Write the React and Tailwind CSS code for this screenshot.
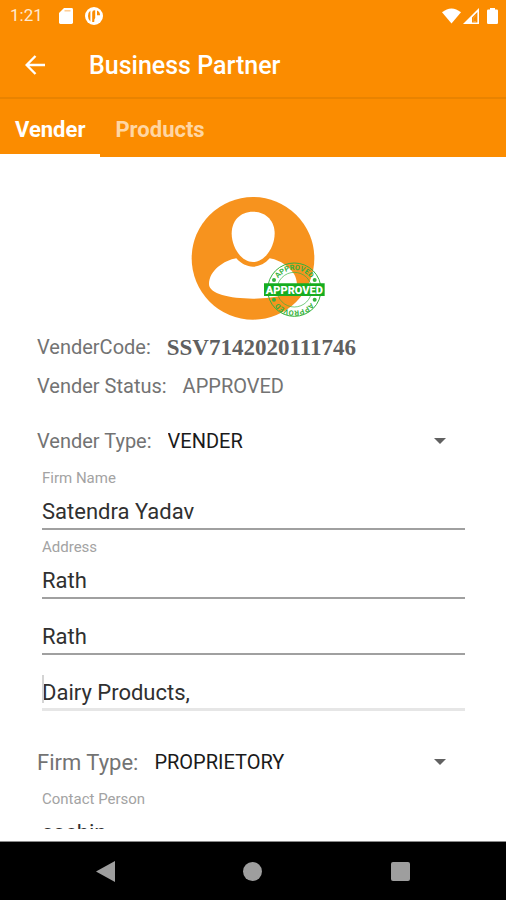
import { useId, useState } from 'react';

function StatusBar() {
  return (
    <div className="flex h-8 items-center justify-between pr-2 pl-2.5 text-[17px] text-[#ffe9d0]">
      <div className="flex items-center">
        <time>1:21</time>
        <svg className="ml-4 h-4 w-[14px]" viewBox="0 0 14 16" fill="white" aria-hidden="true">
          <path d="M5 0h7.600Q14 0 14 1.400v13.200Q14 16 12.600 16H1.400Q0 16 0 14.600V5Z" />
          <path d="M5.500 2.800h6" stroke="#ffc98a" strokeWidth="1.400" />
        </svg>
        <svg className="ml-3 size-[18px]" viewBox="0 0 18 18" aria-hidden="true">
          <circle cx="9" cy="9" r="9" fill="white" />
          <path d="M5.400 3.600Q3 5.600 3 9t2.400 5.400Z" fill="#fb8c00" />
          <path d="M7.200 15V5.600Q7.200 3.200 9.600 3.200h.6V11q-1 .6-1 4Z" fill="#fb8c00" />
          <path d="M12 3.600Q15 5 15 8.200h-3Z" fill="#fb8c00" />
        </svg>
      </div>
      <div className="flex items-center">
        <svg className="h-4 w-[19px]" viewBox="0 0 19 16" fill="white" aria-hidden="true">
          <path d="M0 4.200Q9.500-3.400 19 4.200L9.500 15.600Z" />
        </svg>
        <svg className="ml-0.5 size-4" viewBox="0 0 16 16" fill="white" aria-hidden="true">
          <path fillRule="evenodd" d="M16 0v16H0ZM14.400 4 9 9.400v5.200h5.400ZM10.400 13.400V10L13 7.400v6Z" />
          <path fill="#fb8c00" d="M10.200 13.600v-3.400L13.400 7v6.600Z" />
        </svg>
        <svg className="ml-2 h-4 w-[11px]" viewBox="0 0 11 16" fill="white" aria-hidden="true">
          <path d="M3 0h5v1.600h1.800Q11 1.600 11 2.800v12Q11 16 9.800 16H1.200Q0 16 0 14.800v-12Q0 1.600 1.200 1.600H3Z" />
        </svg>
      </div>
    </div>
  );
}

function Tab({ label, active, onSelect }) {
  return (
    <button
      type="button"
      role="tab"
      aria-selected={active}
      onClick={onSelect}
      className={
        active
          ? 'border-b-3 border-white px-[15px] pt-[5px] text-white'
          : 'border-b-3 border-transparent px-[15px] pt-[5px] text-[#ffd6a3]'
      }
    >
      {label}
    </button>
  );
}

function Avatar() {
  return (
    <svg className="mx-auto block h-[142px] w-[150px]" viewBox="-11 0 450 426" role="img" aria-label="Approved vender">
      <defs>
        <path id="stamp-top" d="M285 314a59 59 0 0 1 118 0" />
        <path id="stamp-bottom" d="M407 314a63 63 0 0 1-126 0" />
      </defs>
      <circle cx="220" cy="220" r="184" fill="#f7931e" />
      <path
        d="M220 80c-40 0-64 29-64 65 0 44 30 86 64 86s65-42 65-86c0-36-25-65-65-65Z"
        fill="white"
      />
      <path
        d="M170 220c-36 6-82 36-82 78 0 28 62 43 132 43s132-15 132-43c0-42-46-72-82-78-14 16-32 25-50 25s-36-9-50-25Z"
        fill="white"
      />
      <g fill="none" stroke="#35b23c">
        <circle cx="344" cy="314" r="80" strokeWidth="3" />
        <circle cx="344" cy="314" r="52" strokeWidth="2" />
      </g>
      <g fill="#35b23c">
        <circle cx="283" cy="285" r="6" />
        <circle cx="405" cy="285" r="6" />
        <circle cx="283" cy="344" r="6" />
        <circle cx="405" cy="344" r="6" />
        <g className="font-['Roboto',sans-serif] text-[22px] font-bold" textAnchor="middle">
          <text>
            <textPath href="#stamp-top" startOffset="50%">APPROVED</textPath>
          </text>
          <text>
            <textPath href="#stamp-bottom" startOffset="50%">APPROVED</textPath>
          </text>
        </g>
      </g>
      <path d="M253 295h182v38H253Z" fill="#16ad1f" />
      <text
        x="344"
        y="326"
        textAnchor="middle"
        fill="white"
        className="font-['Roboto',sans-serif] text-[33px] font-black"
      >
        APPROVED
      </text>
    </svg>
  );
}

function SelectRow({ label, options, labelClass }) {
  const id = useId();
  return (
    <div className="flex h-14 items-center">
      <label htmlFor={id} className={labelClass}>
        {label}
      </label>
      <div className="relative flex-1">
        <select id={id} className="w-full appearance-none bg-transparent text-xl text-[#1a1a1a] outline-none">
          {options.map((o) => (
            <option key={o}>{o}</option>
          ))}
        </select>
        <svg
          className="pointer-events-none absolute top-1/2 right-[19px] h-1.5 w-3 -translate-y-1/2"
          viewBox="0 0 12 6"
          fill="#616161"
          aria-hidden="true"
        >
          <path d="M0 0h12L6 6Z" />
        </svg>
      </div>
    </div>
  );
}

function Field({ label, name, value, focused }) {
  const id = useId();
  return (
    <div className="relative ml-[5px] flex flex-col">
      {label && (
        <label htmlFor={id} className="h-[21px] text-[15px] leading-[18px] text-[#a3a3a3]">
          {label}
        </label>
      )}
      <input
        id={id}
        aria-label={label ? undefined : name}
        defaultValue={value}
        className={
          focused
            ? 'h-10 w-full border-b-3 border-[#e6e6e6] bg-transparent pt-[5px] text-[22px] text-[#303030] outline-none'
            : 'h-10 w-full border-b-2 border-[#a0a0a0] bg-transparent pt-[5px] text-[22px] text-[#303030] outline-none'
        }
      />
      {focused && <span className="absolute bottom-2 left-0 h-7 w-0.5 bg-[#d4d4d4]" aria-hidden="true" />}
    </div>
  );
}

export default function App() {
  const [tab, setTab] = useState('Vender');
  return (
    <div className="flex h-screen flex-col bg-white font-['Roboto',sans-serif]">
      <header className="bg-[#fb8c00]">
        <StatusBar />
        <div className="flex h-[67px] items-center border-b-2 border-[#e98300] pl-[25px]">
          <button type="button" aria-label="Back" className="w-16">
            <svg className="size-5" viewBox="0 0 20 20" fill="none" stroke="white" strokeWidth="2.400" aria-hidden="true">
              <path d="M20 10H2M10.500 1 1.600 10l8.900 9" />
            </svg>
          </button>
          <h1 className="pt-[3px] text-[25px] font-medium text-white">Business Partner</h1>
        </div>
        <div role="tablist" className="flex h-[58px] text-[22px] font-bold">
          {['Vender', 'Products'].map((t) => (
            <Tab key={t} label={t} active={t === tab} onSelect={() => setTab(t)} />
          ))}
        </div>
      </header>

      <main className="mb-3 min-h-0 flex-1 overflow-hidden pt-7 pr-[41px] pl-[37px]">
        <Avatar />
        <dl className="mb-2 text-xl text-[#737373]">
          <div className="flex h-[39px] items-center gap-4">
            <dt>VenderCode:</dt>
            <dd className="pt-[3px] font-[Georgia,'Liberation_Serif',serif] text-[23px] font-bold text-[#606060]">SSV7142020111746</dd>
          </div>
          <div className="flex h-[39px] items-center gap-4">
            <dt>Vender Status:</dt>
            <dd>APPROVED</dd>
          </div>
        </dl>
        <SelectRow label="Vender Type:" options={['VENDER']} labelClass="mr-4 text-xl text-[#737373]" />
        <Field label="Firm Name" value="Satendra Yadav" />
        <div className="mt-2 mb-[23px] flex flex-col gap-4">
          <Field label="Address" value="Rath" />
          <Field name="Address line 2" value="Rath" />
          <Field name="Address line 3" value="Dairy Products," focused />
        </div>
        <SelectRow label="Firm Type:" options={['PROPRIETORY']} labelClass="mr-4 text-[22px] text-[#737373]" />
        <Field label="Contact Person" value="sachin" />
      </main>

      <nav className="flex h-[59px] items-center justify-around border-t border-[#8a8a8a] bg-black px-8">
        <button type="button" aria-label="Back" className="flex">
          <svg className="h-[21px] w-[19px]" viewBox="0 0 19 21" fill="#9e9e9e" aria-hidden="true">
            <path d="M19 0v21L0 10.500Z" />
          </svg>
        </button>
        <button type="button" aria-label="Home" className="size-[19px] rounded-full bg-[#9e9e9e]" />
        <button type="button" aria-label="Recent apps" className="size-[19px] rounded-xs bg-[#9e9e9e]" />
      </nav>
    </div>
  );
}
